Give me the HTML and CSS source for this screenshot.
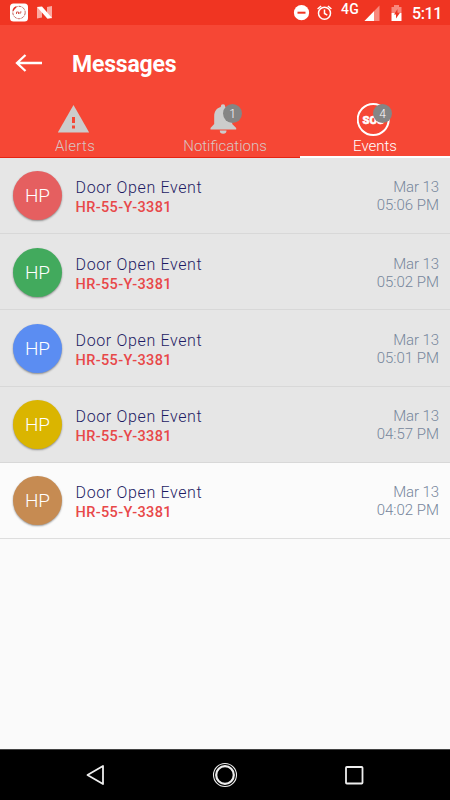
FILE: index.html
```html
<!DOCTYPE html>
<html lang="en">
<head>
<meta charset="utf-8">
<title>Messages</title>
<link rel="stylesheet" href="styles.css">
</head>
<body>
<div class="screen">
  <header class="status">
    <svg class="status-left" width="60" height="25" viewBox="0 0 60 25">
      <rect x="10" y="3.5" width="18" height="18" rx="3.5" fill="#fff"/>
      <circle cx="19" cy="12.5" r="6.2" fill="none" stroke="#c45f59" stroke-width="1" stroke-dasharray="3 1"/>
      <path d="M13 10.5Q14 8 16 7" fill="none" stroke="#e52b20" stroke-width="1.4"/>
      <path d="M16.5 14v-2h2v2M20 14v-2h1.5" fill="none" stroke="#d45a52"/>
      <path d="M37 7l5 3v7.500l-5 1zM47 7l5-1v12.500l-5-4z" fill="#fbaaa1"/>
      <path d="M37 7l5-.6 10 11.600-4.500.7z" fill="#fff"/>
    </svg>
    <svg class="status-icons" width="115" height="25" viewBox="0 0 115 25">
      <circle cx="8.500" cy="12.700" r="7.600" fill="#fff"/>
      <path d="M4.500 12.700h8" stroke="#f03522" stroke-width="2"/>
      <g fill="none" stroke="#fff" stroke-width="1.500">
        <circle cx="31.500" cy="13.300" r="6"/>
        <path d="M31.500 9.500v4l2.800 1.700M24.600 9l3.500-3M38.400 9l-3.500-3"/>
      </g>
      <path d="M71.500 21h15V5.500z" fill="#f8887d"/>
      <path d="M71.500 21h9.500V11.300z" fill="#fff"/>
      <path d="M98.500 7h2.500V5h5v2h2.500v6h-10z" fill="#f8887d"/>
      <path d="M98.500 13h10v8h-10z" fill="#fff"/>
      <path d="M104.500 9l-3.500 5.500h2v4l4-5.700h-2.500z" fill="#ef3422"/>
      <text class="network" x="48" y="14">4G</text>
    </svg>
    <span class="clock">5:11</span>
  </header>

  <div class="titlebar">
    <svg class="back" width="28" height="20" viewBox="0 0 28 20">
      <path d="M27 10H2M10.500 2L2 10l8.500 8" fill="none" stroke="#fff" stroke-width="2.300"/>
    </svg>
    <h1>Messages</h1>
  </div>

  <nav class="tabs">
    <div class="tab">
      <svg class="tab-icon" width="36" height="36" viewBox="0 0 36 36">
        <path d="M16.500 4L32.200 31.500H.8z" fill="#ccc"/>
        <path d="M15 16h3v6h-3zM15 24.500h3v3h-3z" fill="#f44735"/>
      </svg>
      <span class="label alerts">Alerts</span>
    </div>
    <div class="tab">
      <svg class="tab-icon" width="36" height="36" viewBox="0 0 36 36">
        <path d="M16 3.300a2.200 2.200 0 0 1 2.200 2.200v.6c4.300 1 7 4.400 7 9.400v7.500l4 4v1.500H3.500V27l3.700-4v-7.500c0-5 2.400-8.400 6.600-9.400v-.6A2.200 2.200 0 0 1 16 3.300zM12.800 29.500h6.700a3.350 3.300 0 0 1-6.700 0z" fill="#ccc"/>
      </svg>
      <span class="badge">1</span>
      <span class="label notifications">Notifications</span>
    </div>
    <div class="tab active">
      <svg class="tab-icon" width="36" height="36" viewBox="0 0 36 36">
        <circle cx="16.200" cy="18.500" r="15.500" fill="none" stroke="#fff" stroke-width="2"/>
        <text class="sos" x="5.500" y="22.500">SOS</text>
      </svg>
      <span class="badge">4</span>
      <span class="label events">Events</span>
    </div>
  </nav>

  <main class="list">
    <article class="row">
      <div class="avatar red">HP</div>
      <div class="info"><div class="name">Door Open Event</div><div class="plate">HR-55-Y-3381</div></div>
      <div class="when"><div class="date">Mar 13</div><div class="time">05:06 PM</div></div>
    </article>
    <article class="row">
      <div class="avatar green">HP</div>
      <div class="info"><div class="name">Door Open Event</div><div class="plate">HR-55-Y-3381</div></div>
      <div class="when"><div class="date">Mar 13</div><div class="time">05:02 PM</div></div>
    </article>
    <article class="row">
      <div class="avatar blue">HP</div>
      <div class="info"><div class="name">Door Open Event</div><div class="plate">HR-55-Y-3381</div></div>
      <div class="when"><div class="date">Mar 13</div><div class="time">05:01 PM</div></div>
    </article>
    <article class="row">
      <div class="avatar yellow">HP</div>
      <div class="info"><div class="name">Door Open Event</div><div class="plate">HR-55-Y-3381</div></div>
      <div class="when"><div class="date">Mar 13</div><div class="time">04:57 PM</div></div>
    </article>
    <article class="row read">
      <div class="avatar brown">HP</div>
      <div class="info"><div class="name">Door Open Event</div><div class="plate">HR-55-Y-3381</div></div>
      <div class="when"><div class="date">Mar 13</div><div class="time">04:02 PM</div></div>
    </article>
  </main>

  <footer class="navbar">
    <svg width="26" height="26" viewBox="0 0 26 26"><path d="M20 4v18L4.500 13z" fill="none" stroke="#eee" stroke-width="1.800" stroke-linejoin="round"/></svg>
    <svg width="26" height="26" viewBox="0 0 26 26"><circle cx="13" cy="13" r="11.500" fill="none" stroke="#eee" stroke-width="1.100"/><circle cx="13" cy="13" r="8.800" fill="none" stroke="#eee" stroke-width="2.200"/></svg>
    <svg width="26" height="26" viewBox="0 0 26 26"><rect x="5" y="5" width="16.500" height="16.500" rx=".8" fill="none" stroke="#eee" stroke-width="1.800"/></svg>
  </footer>
</div>
</body>
</html>
```
FILE: styles.css
```css
* { box-sizing: border-box; }
body { margin: 0; font-family: Roboto, "Liberation Sans", sans-serif; }
svg { display: block; flex: none; }

.screen {
  width: 450px;
  height: 800px;
  display: flex;
  flex-direction: column;
  overflow: hidden;
  background: #fafafa;
}

.status {
  height: 25px;
  flex: none;
  display: flex;
  background: #f03522;
  color: #fff;
}
.status-icons { margin-left: 233px; }
.network { font-size: 14px; font-weight: 500; fill: #fff; letter-spacing: .2px; }
.clock { margin-left: 4px; font-size: 16px; font-weight: 500; line-height: 27px; letter-spacing: -.4px; white-space: nowrap; }

.titlebar {
  height: 76px;
  flex: none;
  display: flex;
  align-items: center;
  padding-left: 15px;
  background: #f64735;
  color: #fff;
}
.back { margin-top: -1px; }
h1 { margin: 3px 0 0 29px; font-size: 23px; font-weight: 700; line-height: 28px; letter-spacing: -.2px; }

.tabs {
  height: 57px;
  flex: none;
  display: flex;
  background: #f64735;
}
.tab {
  position: relative;
  width: 150px;
  display: flex;
  flex-direction: column;
  align-items: center;
  color: #d8c5c3;
  border-bottom: 1px solid #e52413;
}
.tab.active { color: #fff; border-bottom: 2px solid #fff; }
.tab-icon { width: 36px; height: 36px; }
.label { font-size: 15px; font-weight: 300; line-height: 19px; white-space: nowrap; }
.alerts { letter-spacing: .3px; }
.badge {
  position: absolute;
  left: 73px;
  top: 3px;
  width: 19px;
  height: 19px;
  border-radius: 50%;
  background: #858585;
  color: #fff;
  font-size: 12px;
  font-weight: 300;
  line-height: 20px;
  text-align: center;
}
.sos { font-size: 11px; font-weight: 900; fill: #fff; stroke: #fff; stroke-width: .5px; }

.list { flex: 1; }
.row {
  height: 76.200px;
  display: flex;
  padding: 13.400px 11px 0 13px;
  background: #e6e6e6;
  border-bottom: 1.500px solid #d8d8d8;
}
.row.read { background: #fbfbfb; border-bottom-color: #dedede; }
.avatar {
  width: 49px;
  height: 49px;
  flex: none;
  border-radius: 50%;
  color: #fff;
  font-size: 19px;
  font-weight: 300;
  line-height: 50px;
  text-align: center;
  box-shadow: 0 1px 2px rgba(0, 0, 0, .4);
}
.red { background: #e55f60; }
.green { background: #42aa5d; }
.blue { background: #5b8df2; }
.yellow { background: #dab500; }
.brown { background: #c68b52; }
.info { flex: 1; padding: 6px 0 0 13.500px; white-space: nowrap; }
.name { color: #1e1b64; font-size: 16px; font-weight: 300; line-height: 21px; letter-spacing: .65px; }
.plate { color: #e84849; font-size: 14.500px; font-weight: 500; line-height: 20px; letter-spacing: .38px; }
.when { padding-top: 7px; color: #76869c; text-align: right; font-size: 15px; font-weight: 300; line-height: 18px; white-space: nowrap; }
.date { letter-spacing: -.1px; }

.navbar {
  height: 51px;
  flex: none;
  display: flex;
  align-items: center;
  justify-content: space-between;
  padding: 0 83px;
  background: #000;
  border-top: 1px solid #444;
}
```
